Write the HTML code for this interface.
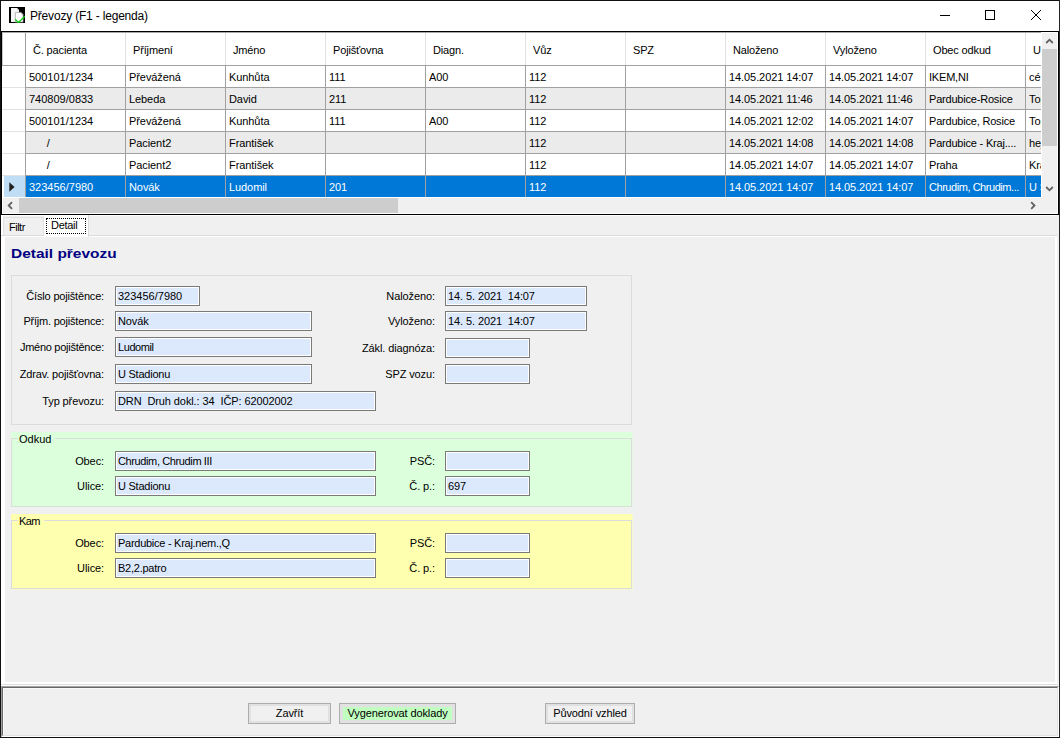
<!DOCTYPE html>
<html lang="cs">
<head>
<meta charset="utf-8">
<title>Převozy (F1 - legenda)</title>
<style>
html,body{margin:0;padding:0;}
body{width:1060px;height:738px;overflow:hidden;background:#f0f0f0;position:relative;
 font-family:"Liberation Sans",sans-serif;font-size:11px;color:#000;}
.abs,.abs *{position:absolute;box-sizing:border-box;white-space:nowrap;}
.abs{left:0;top:0;}
#frame-l{left:0;top:0;width:1px;height:738px;background:#101010;}
#frame-t{left:0;top:0;width:1060px;height:1px;background:#101010;}
#frame-r{left:1059px;top:0;width:1px;height:738px;background:#2a2422;}
#frame-b{left:0;top:737px;width:1060px;height:1px;background:#101010;}
#titlebar{left:1px;top:1px;width:1058px;height:30px;background:#fff;}
#title{left:29px;top:0;height:30px;line-height:30px;font-size:12px;letter-spacing:-0.19px;}
#grid{left:1px;top:31px;width:1058px;height:184px;background:#fff;border:1px solid #000;overflow:hidden;}
#gridin{left:0;top:0;width:1039px;height:165px;overflow:hidden;}
.hl{left:0;width:1056px;height:1px;background:#a0a0a0;}
.vl{top:34px;width:1px;height:132px;background:#a0a0a0;}
.hvl{top:1px;width:1px;height:32px;background:#e2e2e2;}
.row{left:24px;width:1032px;height:21px;}
.alt{background:#ebebeb;}
.sel{background:#0078d7;color:#fff;}
.c{top:1px;height:21px;line-height:21px;width:97px;overflow:hidden;letter-spacing:-0.08px;}
.h{top:2px;height:32px;line-height:32px;}
.sb{background:#f0f0f0;}
.thumb{background:#cdcdcd;}
.lbl{height:20px;line-height:20px;text-align:right;letter-spacing:-0.1px;}
.tb{height:20px;border:1px solid #7a7a7a;background:#fff;}
.tb i{left:1px;top:1px;right:1px;bottom:1px;background:#dce9fc;font-style:normal;line-height:17px;padding-left:1px;letter-spacing:-0.1px;}
.gb{left:11px;width:621px;height:75px;}
.gbb{left:0;top:6px;width:621px;height:69px;border:1px solid #dcdcdc;}
.gbt{left:7px;top:1px;height:13px;line-height:13px;padding:0 4px 0 1px;}
.btn{height:21px;border:1px solid #adadad;background:#e1e1e1;}
.btn i{left:2px;top:2px;right:2px;bottom:2px;background:#f0f0f0;font-style:normal;text-align:center;line-height:15px;letter-spacing:-0.12px;}
</style>
</head>
<body>
<div class="abs" id="root">
<div id="titlebar">
<svg style="left:8px;top:6px" width="16" height="16" viewBox="0 0 16 16">
<rect x="0" y="0" width="16" height="16" fill="#000"/>
<path d="M2 1h6l2 2v12H2z" fill="#f6f6f6"/>
<path d="M8 1v2h2z" fill="#c8c8c8"/>
<path d="M6.4 5.4h5.6l2 2v7.6h-7.6z" fill="#fff" stroke="#a8a8a8" stroke-width="0.8"/>
<path d="M12 5.4v2h2z" fill="#c8c8c8"/>
<path d="M6.2 12.2l3.3 3.3 6.3-6.3" fill="none" stroke="#12d012" stroke-width="1.25"/>
</svg>
<div id="title">Převozy (F1 - legenda)</div>
<svg style="left:939px;top:14px" width="10" height="1" viewBox="0 0 10 1"><rect width="10" height="1" fill="#000"/></svg>
<svg style="left:984px;top:9px" width="10" height="10" viewBox="0 0 10 10"><rect x="0.5" y="0.5" width="9" height="9" fill="none" stroke="#000" stroke-width="1"/></svg>
<svg style="left:1030px;top:9px" width="10" height="10" viewBox="0 0 10 10"><path d="M0 0L10 10M10 0L0 10" stroke="#000" stroke-width="1" fill="none"/></svg>
</div>
<div style="left:1px;top:31px;width:1058px;height:1px;background:#000"></div>
<div id="grid">
<div id="gridin">
<div class="c h" style="left:31px;letter-spacing:-0.15px">Č. pacienta</div>
<div class="c h" style="left:131px;letter-spacing:-0.15px">Příjmení</div>
<div class="c h" style="left:231px;letter-spacing:-0.15px">Jméno</div>
<div class="c h" style="left:331px;letter-spacing:-0.15px">Pojišťovna</div>
<div class="c h" style="left:431px;letter-spacing:-0.15px">Diagn.</div>
<div class="c h" style="left:531px;letter-spacing:-0.15px">Vůz</div>
<div class="c h" style="left:631px;letter-spacing:-0.15px">SPZ</div>
<div class="c h" style="left:731px;letter-spacing:-0.15px">Naloženo</div>
<div class="c h" style="left:831px;letter-spacing:-0.15px">Vyloženo</div>
<div class="c h" style="left:931px;letter-spacing:-0.15px">Obec odkud</div>
<div class="c h" style="left:1031px;letter-spacing:-0.15px">Ulice odkud</div>
<div style="left:23px;top:0;width:1px;height:33px;background:#a0a0a0"></div>
<div style="left:0;top:0;width:1039px;height:1px;background:#a8a8a8"></div>
<div style="left:0;top:1px;width:1px;height:32px;background:#c8c8c8"></div>
<div class="hvl" style="left:123px"></div>
<div class="hvl" style="left:223px"></div>
<div class="hvl" style="left:323px"></div>
<div class="hvl" style="left:423px"></div>
<div class="hvl" style="left:523px"></div>
<div class="hvl" style="left:623px"></div>
<div class="hvl" style="left:723px"></div>
<div class="hvl" style="left:823px"></div>
<div class="hvl" style="left:923px"></div>
<div class="hvl" style="left:1023px"></div>
<div class="row" style="top:34px">
<div class="c" style="left:3px;letter-spacing:0">500101/1234</div>
<div class="c" style="left:103px">Převážená</div>
<div class="c" style="left:203px">Kunhůta</div>
<div class="c" style="left:303px">111</div>
<div class="c" style="left:403px">A00</div>
<div class="c" style="left:503px">112</div>
<div class="c" style="left:703px">14.05.2021 14:07</div>
<div class="c" style="left:803px">14.05.2021 14:07</div>
<div class="c" style="left:903px;letter-spacing:-0.2px">IKEM,NI</div>
<div class="c" style="left:1003px">cé</div>
</div>
<div class="row alt" style="top:56px">
<div class="c" style="left:3px;letter-spacing:0">740809/0833</div>
<div class="c" style="left:103px">Lebeda</div>
<div class="c" style="left:203px">David</div>
<div class="c" style="left:303px">211</div>
<div class="c" style="left:503px">112</div>
<div class="c" style="left:703px">14.05.2021 11:46</div>
<div class="c" style="left:803px">14.05.2021 11:46</div>
<div class="c" style="left:903px;letter-spacing:-0.2px">Pardubice-Rosice</div>
<div class="c" style="left:1003px">Topolská</div>
</div>
<div class="row" style="top:78px">
<div class="c" style="left:3px;letter-spacing:0">500101/1234</div>
<div class="c" style="left:103px">Převážená</div>
<div class="c" style="left:203px">Kunhůta</div>
<div class="c" style="left:303px">111</div>
<div class="c" style="left:403px">A00</div>
<div class="c" style="left:503px">112</div>
<div class="c" style="left:703px">14.05.2021 12:02</div>
<div class="c" style="left:803px">14.05.2021 14:07</div>
<div class="c" style="left:903px;letter-spacing:-0.2px">Pardubice, Rosice</div>
<div class="c" style="left:1003px">Topolská</div>
</div>
<div class="row alt" style="top:100px">
<div class="c" style="left:3px">&nbsp;&nbsp;&nbsp;&nbsp;&nbsp;&nbsp;/</div>
<div class="c" style="left:103px">Pacient2</div>
<div class="c" style="left:203px">František</div>
<div class="c" style="left:503px">112</div>
<div class="c" style="left:703px">14.05.2021 14:08</div>
<div class="c" style="left:803px">14.05.2021 14:08</div>
<div class="c" style="left:903px;letter-spacing:-0.2px">Pardubice - Kraj....</div>
<div class="c" style="left:1003px">hej</div>
</div>
<div class="row" style="top:122px">
<div class="c" style="left:3px">&nbsp;&nbsp;&nbsp;&nbsp;&nbsp;&nbsp;/</div>
<div class="c" style="left:103px">Pacient2</div>
<div class="c" style="left:203px">František</div>
<div class="c" style="left:503px">112</div>
<div class="c" style="left:703px">14.05.2021 14:07</div>
<div class="c" style="left:803px">14.05.2021 14:07</div>
<div class="c" style="left:903px;letter-spacing:-0.2px">Praha</div>
<div class="c" style="left:1003px">Kra</div>
</div>
<div class="row sel" style="top:144px">
<div class="c" style="left:3px;letter-spacing:0">323456/7980</div>
<div class="c" style="left:103px">Novák</div>
<div class="c" style="left:203px">Ludomil</div>
<div class="c" style="left:303px">201</div>
<div class="c" style="left:503px">112</div>
<div class="c" style="left:703px">14.05.2021 14:07</div>
<div class="c" style="left:803px">14.05.2021 14:07</div>
<div class="c" style="left:903px;letter-spacing:-0.45px">Chrudim, Chrudim...</div>
<div class="c" style="left:1003px">U Stadionu</div>
</div>
<div style="left:0;top:55px;width:23px;height:1px;background:#e2e2e2"></div>
<div style="left:0;top:77px;width:23px;height:1px;background:#e2e2e2"></div>
<div style="left:0;top:99px;width:23px;height:1px;background:#e2e2e2"></div>
<div style="left:0;top:121px;width:23px;height:1px;background:#e2e2e2"></div>
<div style="left:0;top:143px;width:23px;height:1px;background:#e2e2e2"></div>
<div style="left:2px;top:144px;width:21px;height:21px;background:#bfddf5"></div>
<svg style="left:7px;top:150px" width="6" height="10" viewBox="0 0 6 10"><path d="M0.3 0.2L5.6 5L0.3 9.8z" fill="#222"/></svg>
<div class="hl" style="top:33px;left:0px"></div>
<div class="hl" style="top:55px;left:23px"></div>
<div class="hl" style="top:77px;left:23px"></div>
<div class="hl" style="top:99px;left:23px"></div>
<div class="hl" style="top:121px;left:23px"></div>
<div class="hl" style="top:143px;left:23px"></div>
<div class="hl" style="top:165px;left:23px"></div>
<div class="vl" style="left:23px"></div>
<div class="vl" style="left:123px"></div>
<div class="vl" style="left:223px"></div>
<div class="vl" style="left:323px"></div>
<div class="vl" style="left:423px"></div>
<div class="vl" style="left:523px"></div>
<div class="vl" style="left:623px"></div>
<div class="vl" style="left:723px"></div>
<div class="vl" style="left:823px"></div>
<div class="vl" style="left:923px"></div>
<div class="vl" style="left:1023px"></div>
</div>
<div style="left:1039px;top:0;width:17px;height:182px;background:#fff"></div>
<div style="left:0;top:165px;width:1056px;height:17px;background:#fff"></div>
<div class="sb" style="left:1040px;top:1px;width:15px;height:180px"></div>
<div class="sb" style="left:1px;top:166px;width:1054px;height:15px"></div>
<svg style="left:1043px;top:6px" width="9" height="6" viewBox="0 0 9 6"><path d="M1.2 5L4.5 1.7L7.8 5" fill="none" stroke="#606060" stroke-width="1.8"/></svg>
<div class="thumb" style="left:1040px;top:17px;width:15px;height:97px"></div>
<svg style="left:1043px;top:154px" width="9" height="6" viewBox="0 0 9 6"><path d="M1.2 1L4.5 4.3L7.8 1" fill="none" stroke="#606060" stroke-width="1.8"/></svg>
<svg style="left:5px;top:169px" width="6" height="9" viewBox="0 0 6 9"><path d="M5 1.2L1.7 4.5L5 7.8" fill="none" stroke="#606060" stroke-width="1.8"/></svg>
<div class="thumb" style="left:17px;top:166px;width:379px;height:15px"></div>
<svg style="left:1028px;top:169px" width="6" height="9" viewBox="0 0 6 9"><path d="M1.2 1.2L4.5 4.5L1.2 7.8" fill="none" stroke="#606060" stroke-width="1.8"/></svg>
</div>
<div id="tabs">
<div style="left:1px;top:215px;width:1056px;height:1px;background:#fff"></div>
<div style="left:1px;top:216px;width:2px;height:20px;background:#fff"></div>
<div style="left:3px;top:217px;width:41px;height:19px;border:1px solid #e2e2e2;border-bottom:none;background:#f0f0f0"></div>
<div style="left:9px;top:220px;height:14px;line-height:14px;letter-spacing:-0.5px">Filtr</div>
<div style="left:1px;top:235px;width:1056px;height:1px;background:#dcdcdc"></div>
<div style="left:1px;top:236px;width:1056px;height:448px;background:#fff"></div>
<div style="left:5px;top:237px;width:1050px;height:445px;background:#f0f0f0"></div>
<div style="left:2px;top:684px;width:1055px;height:1px;background:#dcdcdc"></div>
<div style="left:1px;top:685px;width:1056px;height:1px;background:#fff"></div>
<div style="left:44px;top:215px;width:45px;height:22px;background:#fff;border-right:1px solid #dcdcdc"></div>
<div style="left:46px;top:218px;width:40px;height:16px;border:1px dotted #000"></div>
<div style="left:51px;top:218px;height:14px;line-height:14px;letter-spacing:-0.3px">Detail</div>
</div>
<div id="form">
<div style="left:11px;top:244px;height:20px;line-height:20px;font-size:13.33px;font-weight:bold;color:#000080;transform:scaleX(1.16);transform-origin:0 0" id="dt">Detail převozu</div>
<div style="left:11px;top:275px;width:621px;height:150px;border:1px solid #dcdcdc"></div>
<div class="lbl" style="left:-16px;top:286px;width:120px;letter-spacing:-0.18px">Číslo pojištěnce:</div>
<div class="tb" style="left:115px;top:286px;width:85px"><i style="letter-spacing:0px">323456/7980</i></div>
<div class="lbl" style="left:-16px;top:311px;width:120px;letter-spacing:-0.21px">Příjm. pojištence:</div>
<div class="tb" style="left:115px;top:311px;width:197px"><i>Novák</i></div>
<div class="lbl" style="left:-16px;top:337px;width:120px;letter-spacing:-0.27px">Jméno pojištěnce:</div>
<div class="tb" style="left:115px;top:337px;width:197px"><i style="letter-spacing:-0.43px">Ludomil</i></div>
<div class="lbl" style="left:-16px;top:364px;width:120px;letter-spacing:-0.15px">Zdrav. pojišťovna:</div>
<div class="tb" style="left:115px;top:364px;width:197px"><i style="letter-spacing:-0.24px">U Stadionu</i></div>
<div class="lbl" style="left:-16px;top:391px;width:120px">Typ převozu:</div>
<div class="tb" style="left:115px;top:391px;width:261px"><i>DRN&nbsp; Druh dokl.: 34&nbsp; IČP: 62002002</i></div>
<div class="lbl" style="left:315px;top:286px;width:120px">Naloženo:</div>
<div class="tb" style="left:445px;top:286px;width:142px"><i>14. 5. 2021&nbsp; 14:07</i></div>
<div class="lbl" style="left:315px;top:311px;width:120px">Vyloženo:</div>
<div class="tb" style="left:445px;top:311px;width:142px"><i>14. 5. 2021&nbsp; 14:07</i></div>
<div class="lbl" style="left:315px;top:338px;width:120px">Zákl. diagnóza:</div>
<div class="tb" style="left:445px;top:338px;width:85px"><i></i></div>
<div class="lbl" style="left:315px;top:364px;width:120px">SPZ vozu:</div>
<div class="tb" style="left:445px;top:364px;width:85px"><i></i></div>
<div style="left:11px;top:432px;width:622px;height:76px;background:#e8f8e8"></div>
<div class="gb" style="top:432px;background:#dcffdc"><div class="gbb"></div><div class="gbt" style="background:#dcffdc">Odkud</div></div>
<div class="lbl" style="left:-16px;top:451px;width:120px">Obec:</div>
<div class="tb" style="left:115px;top:451px;width:261px"><i style="letter-spacing:-0.38px">Chrudim, Chrudim III</i></div>
<div class="lbl" style="left:-16px;top:476px;width:120px">Ulice:</div>
<div class="tb" style="left:115px;top:476px;width:261px"><i style="letter-spacing:-0.24px">U Stadionu</i></div>
<div class="lbl" style="left:315px;top:451px;width:120px">PSČ:</div>
<div class="tb" style="left:445px;top:451px;width:85px"><i></i></div>
<div class="lbl" style="left:315px;top:476px;width:120px">Č. p.:</div>
<div class="tb" style="left:445px;top:476px;width:85px"><i>697</i></div>
<div style="left:11px;top:514px;width:622px;height:76px;background:#f8f8d0"></div>
<div class="gb" style="top:514px;background:#ffffb0"><div class="gbb"></div><div class="gbt" style="background:#ffffb0"><span style="position:static;letter-spacing:-0.6px">Kam</span></div></div>
<div class="lbl" style="left:-16px;top:533px;width:120px">Obec:</div>
<div class="tb" style="left:115px;top:533px;width:261px"><i style="letter-spacing:-0.27px">Pardubice - Kraj.nem.,Q</i></div>
<div class="lbl" style="left:-16px;top:558px;width:120px">Ulice:</div>
<div class="tb" style="left:115px;top:558px;width:261px"><i style="letter-spacing:-0.25px">B2,2.patro</i></div>
<div class="lbl" style="left:315px;top:533px;width:120px">PSČ:</div>
<div class="tb" style="left:445px;top:533px;width:85px"><i></i></div>
<div class="lbl" style="left:315px;top:558px;width:120px">Č. p.:</div>
<div class="tb" style="left:445px;top:558px;width:85px"><i></i></div>
</div>
<div id="bottom">
<div style="left:1px;top:686px;width:1058px;height:51px;border:1px solid #a0a0a0;border-right-color:#fff;border-bottom-color:#fff"></div>
<div style="left:2px;top:687px;width:1056px;height:49px;border:1px solid #696969;border-right-color:#e3e3e3;border-bottom-color:#e3e3e3"></div>
<div style="left:3px;top:688px;width:1054px;height:1px;background:#fafafa"></div>
<div style="left:3px;top:688px;width:1px;height:47px;background:#fafafa"></div>
<div class="btn" style="left:248px;top:703px;width:83px"><i>Zavřít</i></div>
<div class="btn" style="left:339px;top:703px;width:117px"><i style="background:#c0ffc0;left:3px;top:3px;right:3px;bottom:3px;line-height:13px">Vygenerovat doklady</i></div>
<div class="btn" style="left:545px;top:703px;width:90px"><i>Původní vzhled</i></div>
</div>
<div id="frame-l"></div><div id="frame-t"></div><div id="frame-r"></div><div id="frame-b"></div>
</div>
</body>
</html>
